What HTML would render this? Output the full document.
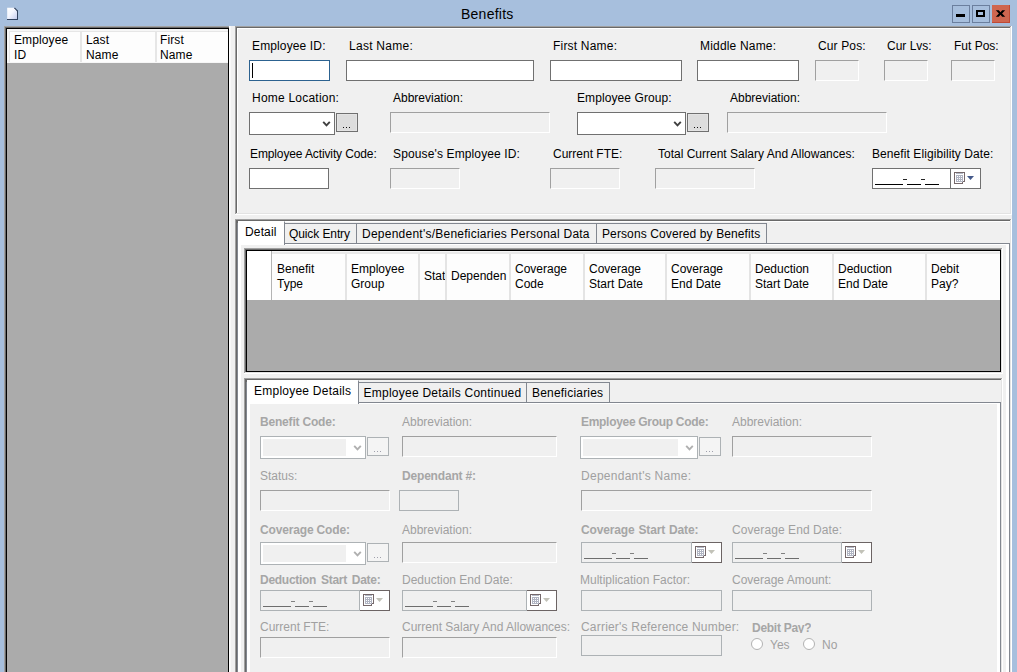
<!DOCTYPE html><html><head><meta charset="utf-8"><title>Benefits</title><style>
*{box-sizing:border-box;margin:0;padding:0}
html,body{width:1017px;height:672px;overflow:hidden;background:#a7bfdd}
body{font-family:"Liberation Sans",sans-serif;font-size:12px;color:#000;position:relative}
.a{position:absolute}
.l{position:absolute;white-space:nowrap;line-height:14px;height:14px}
.d{color:#a0a0a0}
.d.b{color:#a6a6a6}
.b{font-weight:bold;letter-spacing:-0.3px}
.fl{position:absolute;background:#f0f0f0;border:1px solid #adb2b5}
.in{position:absolute;background:#fff;border:1px solid #707070}
.dis{position:absolute;background:#f0f0f0;border:1px solid;border-color:#a0a0a0 #fff #fff #a0a0a0}
.btn{position:absolute;background:#e1e1e1;border:1px solid #adadad;text-align:center;line-height:14px;font-size:12px}
.cb{position:absolute;background:#fff;border:1px solid #707070}
.hd{position:absolute;background:#fdfdfd;line-height:15px;white-space:nowrap;overflow:hidden}
.tab{position:absolute;background:#f0f0f0;border:1px solid #828790;white-space:nowrap}
</style></head><body>
<div class="l" style="left:461px;top:6px;font-size:14px;line-height:16px;height:16px;letter-spacing:0.25px">Benefits</div>
<svg class="a" style="left:7px;top:7px" width="12" height="14" viewBox="0 0 12 14"><defs><linearGradient id="dg" x1="0" y1="0" x2="1" y2="1"><stop offset="0" stop-color="#ffffff"/><stop offset="0.45" stop-color="#f4f6ff"/><stop offset="1" stop-color="#c4ccee"/></linearGradient></defs><path d="M0.2 0.8H7.6L10 3.4V12H0.2Z" fill="url(#dg)"/><path d="M0 12.5H11M10.5 3.6V13" stroke="#31425f" stroke-width="1" fill="none"/><path d="M7.4 0.9L10.6 4.1" stroke="#31425f" stroke-width="1.3"/><path d="M7.3 2.2L8.6 3.5" stroke="#ffffff" stroke-width="0.9"/></svg>
<div class="a" style="left:952px;top:5px;width:18px;height:18px;border:1px solid #6b7f9e"></div>
<div class="a" style="left:956px;top:14px;width:9px;height:3px;background:#000;"></div>
<div class="a" style="left:972px;top:5px;width:18px;height:18px;border:1px solid #6b7f9e"></div>
<div class="a" style="left:976px;top:10px;width:9px;height:7px;border:2px solid #000"></div>
<div class="a" style="left:992px;top:5px;width:18px;height:18px;background:#cf6650;border-bottom:1px solid #c04a35;border-right:1px solid #c04a35"></div>
<svg class="a" style="left:992px;top:5px" width="18" height="18"><path d="M3.8 5.2H6.8L8.5 7.2L10.2 5.2H13.2L10.1 8.5L13.2 11.8H10.2L8.5 9.8L6.8 11.8H3.8L6.9 8.5Z" fill="#000"/></svg>
<div class="a" style="left:4px;top:26px;width:1008px;height:646px;background:#f0f0f0;"></div>
<div class="a" style="left:4px;top:26px;width:226px;height:646px;background:#a0a0a0;"></div>
<div class="a" style="left:5px;top:27px;width:225px;height:645px;background:#696969;"></div>
<div class="a" style="left:6px;top:28px;width:223px;height:644px;background:#000;"></div>
<div class="a" style="left:229px;top:26px;width:1px;height:646px;background:#fff;"></div>
<div class="a" style="left:7px;top:29px;width:221px;height:643px;background:#ababab;"></div>
<div class="a" style="left:7px;top:29px;width:221px;height:34px;background:#f6f6f6;"></div>
<div class="a" style="left:9px;top:31px;width:219px;height:1px;background:#e6e6e6;"></div>
<div class="hd" style="left:10px;top:32px;width:70px;height:30px;padding:1px 0 0 4px;letter-spacing:0.12px">Employee<br>ID</div>
<div class="hd" style="left:82px;top:32px;width:73px;height:30px;padding:1px 0 0 4px;letter-spacing:0.12px">Last<br>Name</div>
<div class="hd" style="left:157px;top:32px;width:71px;height:30px;padding:1px 0 0 3px;letter-spacing:0.12px">First<br>Name</div>
<div class="a" style="left:9px;top:31px;width:1px;height:31px;background:#e6e6e6;"></div>
<div class="a" style="left:80px;top:32px;width:2px;height:30px;background:#e6e6e6;"></div>
<div class="a" style="left:155px;top:32px;width:2px;height:30px;background:#e6e6e6;"></div>
<div class="a" style="left:230px;top:26px;width:1px;height:646px;background:#f8f8f8;"></div>
<div class="a" style="left:235px;top:26px;width:777px;height:189px;background:#f0f0f0;"></div>
<div class="a" style="left:235px;top:26px;width:777px;height:1px;background:#a0a0a0;"></div>
<div class="a" style="left:235px;top:26px;width:1px;height:189px;background:#a0a0a0;"></div>
<div class="a" style="left:236px;top:27px;width:776px;height:1px;background:#696969;"></div>
<div class="a" style="left:236px;top:27px;width:1px;height:188px;background:#696969;"></div>
<div class="a" style="left:237px;top:28px;width:775px;height:1px;background:#fff;"></div>
<div class="a" style="left:237px;top:28px;width:1px;height:187px;background:#fff;"></div>
<div class="a" style="left:1011px;top:26px;width:1px;height:189px;background:#fff;"></div>
<div class="a" style="left:235px;top:214px;width:777px;height:1px;background:#fff;"></div>
<div class="a" style="left:1010px;top:27px;width:1px;height:187px;background:#e3e3e3;"></div>
<div class="a" style="left:236px;top:213px;width:775px;height:1px;background:#e3e3e3;"></div>
<div class="l " style="left:252px;top:39px;letter-spacing:0.13px">Employee ID:</div>
<div class="l " style="left:349px;top:39px;letter-spacing:0.27px">Last Name:</div>
<div class="l " style="left:553px;top:39px;letter-spacing:0.2px">First Name:</div>
<div class="l " style="left:700px;top:39px;letter-spacing:0.18px">Middle Name:</div>
<div class="l " style="left:818px;top:39px;letter-spacing:0.13px">Cur Pos:</div>
<div class="l " style="left:887px;top:39px">Cur Lvs:</div>
<div class="l " style="left:954px;top:39px">Fut Pos:</div>
<div class="in" style="left:249px;top:60px;width:81px;height:21px;border-color:#2c6290"></div>
<div class="a" style="left:252px;top:63px;width:1px;height:15px;background:#000;"></div>
<div class="in" style="left:346px;top:60px;width:188px;height:21px;"></div>
<div class="in" style="left:550px;top:60px;width:132px;height:21px;"></div>
<div class="in" style="left:697px;top:60px;width:102px;height:21px;"></div>
<div class="dis" style="left:815px;top:60px;width:44px;height:21px"></div>
<div class="dis" style="left:884px;top:60px;width:44px;height:21px"></div>
<div class="dis" style="left:951px;top:60px;width:44px;height:21px"></div>
<div class="l " style="left:252px;top:91px;letter-spacing:0.22px">Home Location:</div>
<div class="l " style="left:393px;top:91px">Abbreviation:</div>
<div class="l " style="left:577px;top:91px;letter-spacing:0.09px">Employee Group:</div>
<div class="l " style="left:730px;top:91px">Abbreviation:</div>
<div class="cb" style="left:249px;top:112px;width:86px;height:23px"></div>
<svg class="a" style="left:322px;top:120px" width="10" height="8"><path d="M1.2 1.8L4.5 5.3L7.8 1.8" stroke="#404040" stroke-width="1.9" fill="none"/></svg>
<div class="btn" style="left:336px;top:113px;width:22px;height:19px;background:#dddddd;border-color:#707070;box-shadow:inset 0 0 0 1px #e4e4e4"></div>
<div class="a" style="left:343px;top:127px;width:1px;height:1px;background:#101010;"></div>
<div class="a" style="left:346px;top:127px;width:1px;height:1px;background:#101010;"></div>
<div class="a" style="left:349px;top:127px;width:1px;height:1px;background:#101010;"></div>
<div class="dis" style="left:390px;top:112px;width:160px;height:21px"></div>
<div class="cb" style="left:577px;top:112px;width:109px;height:23px"></div>
<svg class="a" style="left:673px;top:120px" width="10" height="8"><path d="M1.2 1.8L4.5 5.3L7.8 1.8" stroke="#404040" stroke-width="1.9" fill="none"/></svg>
<div class="btn" style="left:687px;top:113px;width:22px;height:19px;background:#dddddd;border-color:#707070;box-shadow:inset 0 0 0 1px #e4e4e4"></div>
<div class="a" style="left:694px;top:127px;width:1px;height:1px;background:#101010;"></div>
<div class="a" style="left:697px;top:127px;width:1px;height:1px;background:#101010;"></div>
<div class="a" style="left:700px;top:127px;width:1px;height:1px;background:#101010;"></div>
<div class="dis" style="left:727px;top:112px;width:160px;height:21px"></div>
<div class="l " style="left:250px;top:147px;letter-spacing:-0.12px">Employee Activity Code:</div>
<div class="l " style="left:393px;top:147px;letter-spacing:0.13px">Spouse's Employee ID:</div>
<div class="l " style="left:553px;top:147px">Current FTE:</div>
<div class="l " style="left:658px;top:147px">Total Current Salary And Allowances:</div>
<div class="l " style="left:872px;top:147px;letter-spacing:0.08px">Benefit Eligibility Date:</div>
<div class="in" style="left:249px;top:168px;width:80px;height:21px;"></div>
<div class="dis" style="left:390px;top:168px;width:70px;height:21px"></div>
<div class="dis" style="left:550px;top:168px;width:70px;height:21px"></div>
<div class="dis" style="left:655px;top:168px;width:100px;height:21px"></div>
<div class="in" style="left:872px;top:168px;width:109px;height:21px;background:#fff;border-color:#707070"></div>
<div class="a" style="left:950px;top:168px;width:1px;height:21px;background:#707070;"></div>
<div class="a" style="left:875px;top:184px;width:28px;height:1px;background:#000;"></div>
<div class="a" style="left:907px;top:184px;width:14px;height:1px;background:#000;"></div>
<div class="a" style="left:925px;top:184px;width:14px;height:1px;background:#000;"></div>
<div class="a" style="left:903px;top:179px;width:4px;height:1px;background:#000;opacity:.85"></div>
<div class="a" style="left:921px;top:179px;width:4px;height:1px;background:#000;opacity:.85"></div>
<svg class="a" style="left:954px;top:172px" width="11" height="12" shape-rendering="crispEdges"><path d="M0.5 0.5H10.5V9.5H8.5V11.5H0.5Z" fill="#fff" stroke="#75686a"/><path d="M2 1.5H9" stroke="#b4bac8"/><rect x="2" y="3" width="7" height="7" fill="#b0b4c2"/><path d="M3 4h1v1h-1zM5 4h1v1h-1zM7 4h1v1h-1zM3 6h1v1h-1zM5 6h1v1h-1zM7 6h1v1h-1zM3 8h1v1h-1zM5 8h1v1h-1zM7 8h1v1h-1z" fill="#fff"/></svg>
<svg class="a" style="left:967px;top:176px" width="7" height="4"><path d="M0 0H7L3.5 4Z" fill="#44598a"/></svg>
<div class="a" style="left:235px;top:219px;width:777px;height:470px;background:#f0f0f0;"></div>
<div class="a" style="left:235px;top:219px;width:777px;height:1px;background:#a0a0a0;"></div>
<div class="a" style="left:235px;top:219px;width:1px;height:470px;background:#a0a0a0;"></div>
<div class="a" style="left:236px;top:220px;width:776px;height:1px;background:#696969;"></div>
<div class="a" style="left:236px;top:220px;width:1px;height:469px;background:#696969;"></div>
<div class="a" style="left:237px;top:221px;width:775px;height:1px;background:#fff;"></div>
<div class="a" style="left:237px;top:221px;width:1px;height:468px;background:#fff;"></div>
<div class="a" style="left:1011px;top:219px;width:1px;height:470px;background:#fff;"></div>
<div class="a" style="left:235px;top:688px;width:777px;height:1px;background:#fff;"></div>
<div class="a" style="left:1010px;top:220px;width:1px;height:468px;background:#e3e3e3;"></div>
<div class="a" style="left:236px;top:687px;width:775px;height:1px;background:#e3e3e3;"></div>
<div class="a" style="left:237px;top:243px;width:773px;height:440px;background:#fff;border:1px solid #828790"></div>
<div class="a" style="left:241px;top:245px;width:765px;height:440px;background:#f0f0f0;"></div>
<div class="tab" style="left:284px;top:223px;width:73px;height:21px;line-height:14px;padding:3px 0 0 4px;letter-spacing:-0.1px">Quick Entry</div>
<div class="tab" style="left:356px;top:223px;width:241px;height:21px;line-height:14px;padding:3px 0 0 5px;letter-spacing:0.24px">Dependent's/Beneficiaries Personal Data</div>
<div class="tab" style="left:596px;top:223px;width:171px;height:21px;line-height:14px;padding:3px 0 0 5px;letter-spacing:0.11px">Persons Covered by Benefits</div>
<div class="tab" style="left:237px;top:221px;width:48px;height:24px;background:#fff;border-bottom:none;border-top-color:#fff;line-height:14px;padding:3px 0 0 7px;letter-spacing:0.15px">Detail</div>
<div class="a" style="left:237px;top:221px;width:1px;height:2px;background:#696969;"></div>
<div class="a" style="left:244px;top:248px;width:759px;height:126px;background:#fff;"></div>
<div class="a" style="left:244px;top:248px;width:758px;height:125px;background:#a0a0a0;"></div>
<div class="a" style="left:245px;top:249px;width:757px;height:124px;background:#e3e3e3;"></div>
<div class="a" style="left:245px;top:249px;width:756px;height:123px;background:#696969;"></div>
<div class="a" style="left:246px;top:250px;width:755px;height:122px;background:#000;"></div>
<div class="a" style="left:247px;top:251px;width:753px;height:120px;background:#ababab;"></div>
<div class="a" style="left:247px;top:251px;width:753px;height:49px;background:#f6f6f6;"></div>
<div class="a" style="left:272px;top:252px;width:728px;height:2px;background:#e9e9e9;"></div>
<div class="a" style="left:247px;top:251px;width:24px;height:49px;background:#fff;"></div>
<div class="a" style="left:271px;top:251px;width:1px;height:49px;background:#b4b4b4;"></div>
<div class="hd" style="left:272px;top:254px;width:73px;height:46px;padding:8px 0 0 5px">Benefit<br>Type</div>
<div class="hd" style="left:347px;top:254px;width:71px;height:46px;padding:8px 0 0 4px">Employee<br>Group</div>
<div class="a" style="left:345px;top:254px;width:2px;height:46px;background:#e4e4e4;"></div>
<div class="hd" style="left:420px;top:254px;width:25px;height:46px;padding:15px 0 0 4px">Stat</div>
<div class="a" style="left:418px;top:254px;width:2px;height:46px;background:#e4e4e4;"></div>
<div class="hd" style="left:447px;top:254px;width:62px;height:46px;padding:15px 0 0 4px">Dependen</div>
<div class="a" style="left:445px;top:254px;width:2px;height:46px;background:#e4e4e4;"></div>
<div class="hd" style="left:511px;top:254px;width:72px;height:46px;padding:8px 0 0 4px">Coverage<br>Code</div>
<div class="a" style="left:509px;top:254px;width:2px;height:46px;background:#e4e4e4;"></div>
<div class="hd" style="left:585px;top:254px;width:80px;height:46px;padding:8px 0 0 4px">Coverage<br>Start Date</div>
<div class="a" style="left:583px;top:254px;width:2px;height:46px;background:#e4e4e4;"></div>
<div class="hd" style="left:667px;top:254px;width:82px;height:46px;padding:8px 0 0 4px">Coverage<br>End Date</div>
<div class="a" style="left:665px;top:254px;width:2px;height:46px;background:#e4e4e4;"></div>
<div class="hd" style="left:751px;top:254px;width:81px;height:46px;padding:8px 0 0 4px">Deduction<br>Start Date</div>
<div class="a" style="left:749px;top:254px;width:2px;height:46px;background:#e4e4e4;"></div>
<div class="hd" style="left:834px;top:254px;width:91px;height:46px;padding:8px 0 0 4px">Deduction<br>End Date</div>
<div class="a" style="left:832px;top:254px;width:2px;height:46px;background:#e4e4e4;"></div>
<div class="hd" style="left:927px;top:254px;width:73px;height:46px;padding:8px 0 0 4px">Debit<br>Pay?</div>
<div class="a" style="left:925px;top:254px;width:2px;height:46px;background:#e4e4e4;"></div>
<div class="a" style="left:244px;top:378px;width:759px;height:300px;background:#f0f0f0;"></div>
<div class="a" style="left:244px;top:378px;width:759px;height:1px;background:#a0a0a0;"></div>
<div class="a" style="left:244px;top:378px;width:1px;height:300px;background:#a0a0a0;"></div>
<div class="a" style="left:245px;top:379px;width:758px;height:1px;background:#696969;"></div>
<div class="a" style="left:245px;top:379px;width:1px;height:299px;background:#696969;"></div>
<div class="a" style="left:1002px;top:378px;width:1px;height:300px;background:#fff;"></div>
<div class="a" style="left:1001px;top:379px;width:1px;height:299px;background:#e3e3e3;"></div>
<div class="a" style="left:246px;top:402px;width:755px;height:300px;background:#fff;border:1px solid #828790"></div>
<div class="a" style="left:250px;top:404px;width:747px;height:300px;background:#f0f0f0;"></div>
<div class="tab" style="left:358px;top:382px;width:169px;height:21px;line-height:14px;padding:3px 0 0 4.5px;letter-spacing:0.25px">Employee Details Continued</div>
<div class="tab" style="left:526px;top:382px;width:84px;height:21px;line-height:14px;padding:3px 0 0 5px;letter-spacing:0.2px">Beneficiaries</div>
<div class="tab" style="left:246px;top:380px;width:113px;height:24px;background:#fff;border-bottom:none;border-top-color:#fff;line-height:14px;padding:3px 0 0 7px;letter-spacing:0.24px">Employee Details</div>
<div class="a" style="left:246px;top:380px;width:1px;height:2px;background:#696969;"></div>
<div class="l d b" style="left:260px;top:415px;letter-spacing:-0.19px">Benefit Code:</div>
<div class="l d" style="left:402px;top:415px">Abbreviation:</div>
<div class="l d b" style="left:581px;top:415px;letter-spacing:-0.3px">Employee Group Code:</div>
<div class="l d" style="left:732px;top:415px">Abbreviation:</div>
<div class="cb" style="left:260px;top:436px;width:106px;height:23px;border-color:#adb2b5;background:#fff"><div class="a" style="left:2px;top:2px;right:19px;bottom:2px;background:#f0f0f0"></div></div>
<svg class="a" style="left:353px;top:444px" width="10" height="8"><path d="M1.2 1.8L4.5 5.3L7.8 1.8" stroke="#b0b0b0" stroke-width="1.9" fill="none"/></svg>
<div class="btn" style="left:367px;top:437px;width:22px;height:19px;background:#f4f4f4;border-color:#adb2b5"></div>
<div class="a" style="left:374px;top:451px;width:1px;height:1px;background:#a0a0ac;"></div>
<div class="a" style="left:377px;top:451px;width:1px;height:1px;background:#a0a0ac;"></div>
<div class="a" style="left:380px;top:451px;width:1px;height:1px;background:#a0a0ac;"></div>
<div class="dis" style="left:402px;top:436px;width:155px;height:21px"></div>
<div class="cb" style="left:580px;top:436px;width:118px;height:23px;border-color:#adb2b5;background:#fff"><div class="a" style="left:2px;top:2px;right:19px;bottom:2px;background:#f0f0f0"></div></div>
<svg class="a" style="left:685px;top:444px" width="10" height="8"><path d="M1.2 1.8L4.5 5.3L7.8 1.8" stroke="#b0b0b0" stroke-width="1.9" fill="none"/></svg>
<div class="btn" style="left:699px;top:437px;width:22px;height:19px;background:#f4f4f4;border-color:#adb2b5"></div>
<div class="a" style="left:706px;top:451px;width:1px;height:1px;background:#a0a0ac;"></div>
<div class="a" style="left:709px;top:451px;width:1px;height:1px;background:#a0a0ac;"></div>
<div class="a" style="left:712px;top:451px;width:1px;height:1px;background:#a0a0ac;"></div>
<div class="dis" style="left:732px;top:436px;width:140px;height:21px"></div>
<div class="l d" style="left:260px;top:469px">Status:</div>
<div class="l d b" style="left:402px;top:469px;letter-spacing:-0.18px">Dependant #:</div>
<div class="l d" style="left:581px;top:469px;letter-spacing:0.27px">Dependant's Name:</div>
<div class="dis" style="left:260px;top:490px;width:130px;height:21px"></div>
<div class="fl" style="left:399px;top:490px;width:60px;height:21px"></div>
<div class="dis" style="left:581px;top:490px;width:291px;height:21px"></div>
<div class="l d b" style="left:260px;top:523px;letter-spacing:-0.16px">Coverage Code:</div>
<div class="l d" style="left:402px;top:523px">Abbreviation:</div>
<div class="l d b" style="left:581px;top:523px;letter-spacing:-0.15px;word-spacing:0.8px">Coverage Start Date:</div>
<div class="l d" style="left:732px;top:523px;letter-spacing:0.08px">Coverage End Date:</div>
<div class="cb" style="left:260px;top:542px;width:106px;height:23px;border-color:#adb2b5;background:#fff"><div class="a" style="left:2px;top:2px;right:19px;bottom:2px;background:#f0f0f0"></div></div>
<svg class="a" style="left:353px;top:550px" width="10" height="8"><path d="M1.2 1.8L4.5 5.3L7.8 1.8" stroke="#b0b0b0" stroke-width="1.9" fill="none"/></svg>
<div class="btn" style="left:367px;top:543px;width:22px;height:19px;background:#f4f4f4;border-color:#adb2b5"></div>
<div class="a" style="left:374px;top:557px;width:1px;height:1px;background:#a0a0ac;"></div>
<div class="a" style="left:377px;top:557px;width:1px;height:1px;background:#a0a0ac;"></div>
<div class="a" style="left:380px;top:557px;width:1px;height:1px;background:#a0a0ac;"></div>
<div class="dis" style="left:402px;top:542px;width:155px;height:21px"></div>
<div class="in" style="left:581px;top:542px;width:111px;height:21px;background:#f0f0f0;border-color:#adb2b5"></div>
<div class="in" style="left:692px;top:542px;width:30px;height:21px;background:#fff;border-color:#6c6464;border-left:none"></div>
<div class="a" style="left:584px;top:558px;width:28px;height:1px;background:#6d6d6d;"></div>
<div class="a" style="left:616px;top:558px;width:14px;height:1px;background:#6d6d6d;"></div>
<div class="a" style="left:634px;top:558px;width:14px;height:1px;background:#6d6d6d;"></div>
<div class="a" style="left:612px;top:553px;width:4px;height:1px;background:#6d6d6d;opacity:.85"></div>
<div class="a" style="left:630px;top:553px;width:4px;height:1px;background:#6d6d6d;opacity:.85"></div>
<svg class="a" style="left:695px;top:546px" width="11" height="12" shape-rendering="crispEdges"><path d="M0.5 0.5H10.5V9.5H8.5V11.5H0.5Z" fill="#fff" stroke="#75686a"/><path d="M2 1.5H9" stroke="#b4bac8"/><rect x="2" y="3" width="7" height="7" fill="#b0b4c2"/><path d="M3 4h1v1h-1zM5 4h1v1h-1zM7 4h1v1h-1zM3 6h1v1h-1zM5 6h1v1h-1zM7 6h1v1h-1zM3 8h1v1h-1zM5 8h1v1h-1zM7 8h1v1h-1z" fill="#fff"/></svg>
<svg class="a" style="left:708px;top:550px" width="7" height="4"><path d="M0 0H7L3.5 4Z" fill="#c2c2b8"/></svg>
<div class="in" style="left:732px;top:542px;width:110px;height:21px;background:#f0f0f0;border-color:#adb2b5"></div>
<div class="in" style="left:842px;top:542px;width:30px;height:21px;background:#fff;border-color:#6c6464;border-left:none"></div>
<div class="a" style="left:735px;top:558px;width:28px;height:1px;background:#6d6d6d;"></div>
<div class="a" style="left:767px;top:558px;width:14px;height:1px;background:#6d6d6d;"></div>
<div class="a" style="left:785px;top:558px;width:14px;height:1px;background:#6d6d6d;"></div>
<div class="a" style="left:763px;top:553px;width:4px;height:1px;background:#6d6d6d;opacity:.85"></div>
<div class="a" style="left:781px;top:553px;width:4px;height:1px;background:#6d6d6d;opacity:.85"></div>
<svg class="a" style="left:845px;top:546px" width="11" height="12" shape-rendering="crispEdges"><path d="M0.5 0.5H10.5V9.5H8.5V11.5H0.5Z" fill="#fff" stroke="#75686a"/><path d="M2 1.5H9" stroke="#b4bac8"/><rect x="2" y="3" width="7" height="7" fill="#b0b4c2"/><path d="M3 4h1v1h-1zM5 4h1v1h-1zM7 4h1v1h-1zM3 6h1v1h-1zM5 6h1v1h-1zM7 6h1v1h-1zM3 8h1v1h-1zM5 8h1v1h-1zM7 8h1v1h-1z" fill="#fff"/></svg>
<svg class="a" style="left:858px;top:550px" width="7" height="4"><path d="M0 0H7L3.5 4Z" fill="#c2c2b8"/></svg>
<div class="l d b" style="left:260px;top:573px;letter-spacing:-0.28px;word-spacing:1.8px">Deduction Start Date:</div>
<div class="l d" style="left:402px;top:573px">Deduction End Date:</div>
<div class="l d" style="left:580px;top:573px">Multiplication Factor:</div>
<div class="l d" style="left:732px;top:573px">Coverage Amount:</div>
<div class="in" style="left:260px;top:590px;width:100px;height:21px;background:#f0f0f0;border-color:#adb2b5"></div>
<div class="in" style="left:360px;top:590px;width:30px;height:21px;background:#fff;border-color:#6c6464;border-left:none"></div>
<div class="a" style="left:263px;top:606px;width:28px;height:1px;background:#6d6d6d;"></div>
<div class="a" style="left:295px;top:606px;width:14px;height:1px;background:#6d6d6d;"></div>
<div class="a" style="left:313px;top:606px;width:14px;height:1px;background:#6d6d6d;"></div>
<div class="a" style="left:291px;top:601px;width:4px;height:1px;background:#6d6d6d;opacity:.85"></div>
<div class="a" style="left:309px;top:601px;width:4px;height:1px;background:#6d6d6d;opacity:.85"></div>
<svg class="a" style="left:363px;top:594px" width="11" height="12" shape-rendering="crispEdges"><path d="M0.5 0.5H10.5V9.5H8.5V11.5H0.5Z" fill="#fff" stroke="#75686a"/><path d="M2 1.5H9" stroke="#b4bac8"/><rect x="2" y="3" width="7" height="7" fill="#b0b4c2"/><path d="M3 4h1v1h-1zM5 4h1v1h-1zM7 4h1v1h-1zM3 6h1v1h-1zM5 6h1v1h-1zM7 6h1v1h-1zM3 8h1v1h-1zM5 8h1v1h-1zM7 8h1v1h-1z" fill="#fff"/></svg>
<svg class="a" style="left:376px;top:598px" width="7" height="4"><path d="M0 0H7L3.5 4Z" fill="#c2c2b8"/></svg>
<div class="in" style="left:402px;top:590px;width:125px;height:21px;background:#f0f0f0;border-color:#adb2b5"></div>
<div class="in" style="left:527px;top:590px;width:30px;height:21px;background:#fff;border-color:#6c6464;border-left:none"></div>
<div class="a" style="left:405px;top:606px;width:28px;height:1px;background:#6d6d6d;"></div>
<div class="a" style="left:437px;top:606px;width:14px;height:1px;background:#6d6d6d;"></div>
<div class="a" style="left:455px;top:606px;width:14px;height:1px;background:#6d6d6d;"></div>
<div class="a" style="left:433px;top:601px;width:4px;height:1px;background:#6d6d6d;opacity:.85"></div>
<div class="a" style="left:451px;top:601px;width:4px;height:1px;background:#6d6d6d;opacity:.85"></div>
<svg class="a" style="left:530px;top:594px" width="11" height="12" shape-rendering="crispEdges"><path d="M0.5 0.5H10.5V9.5H8.5V11.5H0.5Z" fill="#fff" stroke="#75686a"/><path d="M2 1.5H9" stroke="#b4bac8"/><rect x="2" y="3" width="7" height="7" fill="#b0b4c2"/><path d="M3 4h1v1h-1zM5 4h1v1h-1zM7 4h1v1h-1zM3 6h1v1h-1zM5 6h1v1h-1zM7 6h1v1h-1zM3 8h1v1h-1zM5 8h1v1h-1zM7 8h1v1h-1z" fill="#fff"/></svg>
<svg class="a" style="left:543px;top:598px" width="7" height="4"><path d="M0 0H7L3.5 4Z" fill="#c2c2b8"/></svg>
<div class="fl" style="left:581px;top:590px;width:141px;height:21px"></div>
<div class="fl" style="left:732px;top:590px;width:140px;height:21px"></div>
<div class="l d" style="left:260px;top:620px">Current FTE:</div>
<div class="l d" style="left:402px;top:620px">Current Salary And Allowances:</div>
<div class="l d" style="left:581px;top:620px;letter-spacing:0.2px">Carrier's Reference Number:</div>
<div class="l d b" style="left:752px;top:621px;height:12px;overflow:hidden;letter-spacing:-0.27px">Debit Pay?</div>
<div class="dis" style="left:260px;top:637px;width:130px;height:21px"></div>
<div class="dis" style="left:402px;top:637px;width:155px;height:21px"></div>
<div class="fl" style="left:581px;top:635px;width:141px;height:21px"></div>
<div class="a" style="left:751px;top:638px;width:12px;height:12px;border:1px solid #b2b2b2;border-radius:50%;background:#fff"></div>
<div class="l d" style="left:770px;top:638px">Yes</div>
<div class="a" style="left:803px;top:638px;width:12px;height:12px;border:1px solid #b2b2b2;border-radius:50%;background:#fff"></div>
<div class="l d" style="left:822px;top:638px">No</div>
<div class="a" style="left:1012px;top:26px;width:5px;height:646px;background:#a7bfdd;"></div>
<div class="a" style="left:0px;top:26px;width:4px;height:646px;background:#a7bfdd;"></div>
</body></html>
